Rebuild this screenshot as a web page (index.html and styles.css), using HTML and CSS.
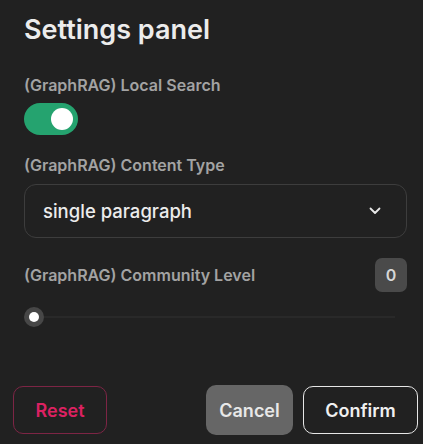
FILE: index.html
```html
<!DOCTYPE html>
<html lang="en">
<head>
<meta charset="utf-8">
<title>Settings panel</title>
<link rel="stylesheet" href="styles.css">
</head>
<body>
<div class="panel">
  <h1 class="title">Settings panel</h1>

  <div class="field field-switch">
    <div class="label">(GraphRAG) Local Search</div>
    <div class="toggle"><span class="knob"></span></div>
  </div>

  <div class="field field-select">
    <div class="label">(GraphRAG) Content Type</div>
    <div class="select">
      <span class="select-value">single paragraph</span>
      <svg class="chevron" width="12" height="8" viewBox="0 0 12 8"><path d="M1.5 1.5 L6 6 L10.5 1.5" fill="none" stroke="#e8e8e8" stroke-width="1.8" stroke-linecap="round" stroke-linejoin="round"/></svg>
    </div>
  </div>

  <div class="field field-slider">
    <div class="label-row">
      <div class="label">(GraphRAG) Community Level</div>
      <div class="badge">0</div>
    </div>
    <div class="slider">
      <span class="thumb"></span>
      <span class="track"></span>
    </div>
  </div>
</div>

<div class="footer">
  <button class="btn btn-reset">Reset</button>
  <div class="actions">
    <button class="btn btn-cancel">Cancel</button>
    <button class="btn btn-confirm">Confirm</button>
  </div>
</div>
</body>
</html>
```
FILE: styles.css
```css
html, body {
  margin: 0;
  padding: 0;
  background: #212121;
  font-family: Inter, "Noto Sans", sans-serif;
  color: #ececec;
}

.panel {
  padding: 12px 16px 0 24px;
}

.title {
  margin: 0;
  font-size: 27px;
  font-weight: 600;
  line-height: 36px;
  color: #ececec;
}

.label {
  font-size: 16px;
  font-weight: 600;
  line-height: 20px;
  color: #a3a3a3;
}

.field-switch { margin-top: 27px; }
.field-switch .label { margin-bottom: 8px; }

.toggle {
  width: 54px;
  height: 32px;
  border-radius: 16px;
  background: #25a36f;
  display: flex;
  align-items: center;
  justify-content: flex-end;
  padding-right: 5px;
  box-sizing: border-box;
}

.knob {
  width: 22px;
  height: 22px;
  border-radius: 50%;
  background: #ffffff;
}

.field-select { margin-top: 20px; }
.field-select .label { margin-bottom: 9px; }

.select {
  height: 54px;
  box-sizing: border-box;
  border: 1px solid #3d3d3d;
  border-radius: 12px;
  display: flex;
  align-items: center;
  justify-content: space-between;
  padding: 0 25px 0 18px;
}

.select-value {
  font-size: 18.5px;
  font-weight: 500;
  color: #ececec;
}

.field-slider { margin-top: 20px; }

.label-row {
  display: flex;
  align-items: center;
  justify-content: space-between;
}

.badge {
  width: 32px;
  height: 34px;
  border-radius: 7px;
  background: #4a4a4a;
  color: #d6d6d6;
  font-size: 16px;
  font-weight: 600;
  display: flex;
  align-items: center;
  justify-content: center;
}

.slider {
  height: 20px;
  margin-top: 15px;
  display: flex;
  align-items: center;
}

.thumb {
  width: 20px;
  height: 20px;
  border-radius: 50%;
  background: #474747;
  display: flex;
  align-items: center;
  justify-content: center;
  flex: none;
}

.thumb::after {
  content: "";
  width: 10px;
  height: 10px;
  border-radius: 50%;
  background: #ffffff;
}

.track {
  flex: 1;
  height: 2px;
  background: #292929;
  margin-right: 12px;
}

.footer {
  display: flex;
  justify-content: space-between;
  align-items: center;
  padding: 0 5px 0 13px;
  margin-top: 58px;
}

.actions {
  display: flex;
  gap: 10px;
  align-items: center;
}

.btn {
  font-family: Inter, "Noto Sans", sans-serif;
  font-size: 18px;
  font-weight: 600;
  border-radius: 10px;
  background: transparent;
  cursor: pointer;
  box-sizing: border-box;
}

.btn-reset {
  width: 94px;
  height: 48px;
  border: 1px solid #7d2545;
  color: #dc2162;
}

.btn-cancel {
  width: 87px;
  height: 50px;
  border: none;
  background: #666666;
  color: #e8e8e8;
}

.btn-confirm {
  width: 115px;
  height: 48px;
  border: 1px solid #e6e6e6;
  color: #f0f0f0;
}
```
